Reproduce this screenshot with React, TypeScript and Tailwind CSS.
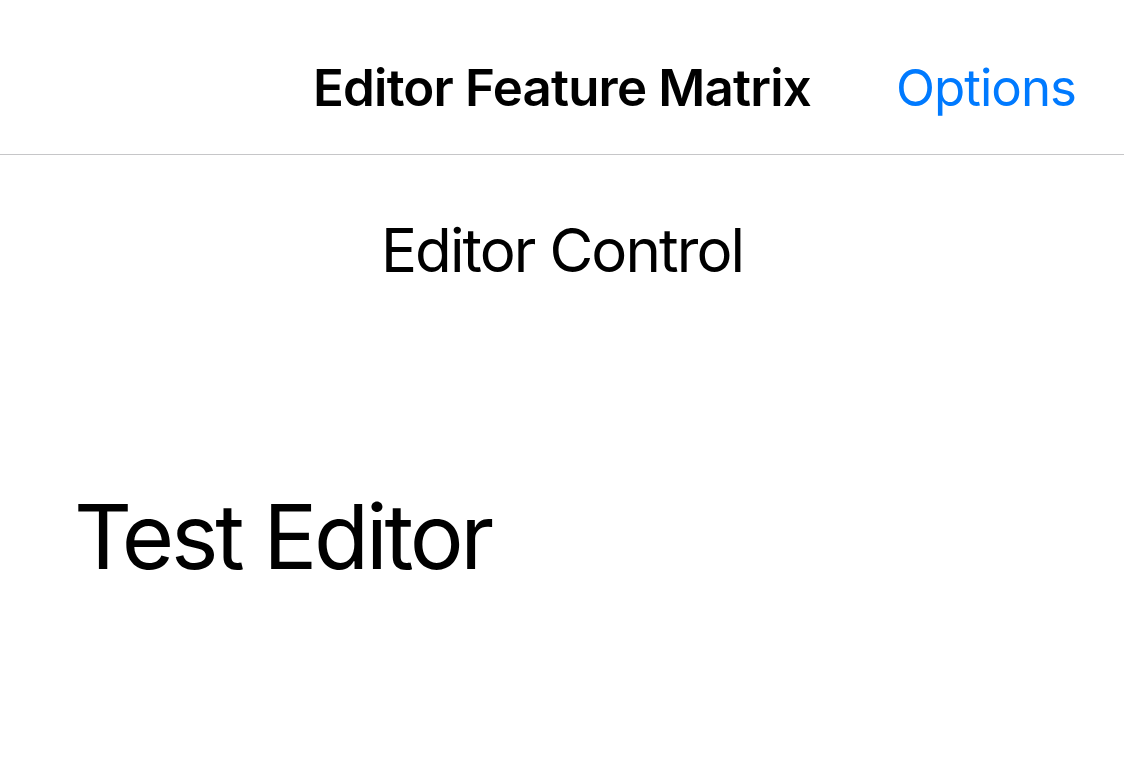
import React from 'react';

export default function App() {
  return (
    <div className="min-h-[776px] bg-white text-black" style={{ fontFamily: 'Inter, "Noto Sans", sans-serif' }}>
      {/* Nav bar */}
      <div className="h-[155px] border-b border-[#c6c6c8] grid grid-cols-[1fr_auto_1fr] items-start pt-[62px]">
        <div />
        <h1 className="text-[51px] leading-none font-semibold tracking-[-0.8px]">Editor Feature Matrix</h1>
        <div className="flex justify-end pr-[48px]">
          <button className="text-[51px] leading-none text-[#007aff] tracking-[-1px]">Options</button>
        </div>
      </div>

      <div className="mt-[65px] text-center text-[60px] leading-none tracking-[-1.9px]">Editor Control</div>

      <div className="mt-[212px] pl-[74px] text-[90px] leading-none tracking-[-3.3px]">Test Editor</div>
    </div>
  );
}
